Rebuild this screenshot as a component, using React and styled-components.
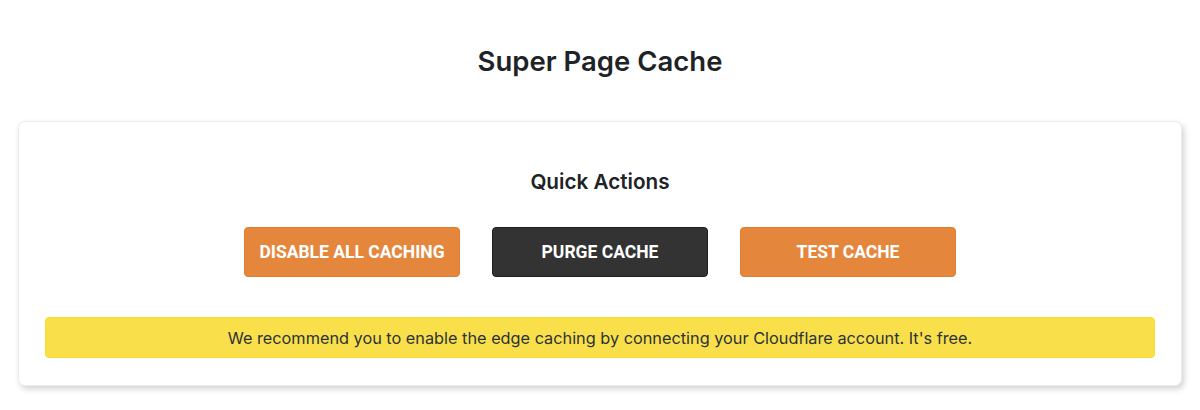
import React from "react";
import styled, { createGlobalStyle } from "styled-components";

const GlobalStyle = createGlobalStyle`
  body {
    margin: 0;
    background: #fff;
    font-family: Inter, "Noto Sans", sans-serif;
    color: #1d2327;
  }
`;

const Page = styled.div`
  padding: 0 18px 20px 18px;
  display: flex;
  flex-direction: column;
  align-items: stretch;
`;

const Title = styled.h1`
  margin: 0;
  padding: 45px 0 44px;
  text-align: center;
  font-size: 27.5px;
  font-weight: 600;
  line-height: 32px;
  color: #1d2327;
`;

const Card = styled.section`
  background: #fff;
  border: 1px solid #ececec;
  border-radius: 7px;
  box-shadow: 2px 3px 6px rgba(0, 0, 0, 0.18);
  padding: 46px 26px 27px;
  display: flex;
  flex-direction: column;
  align-items: center;
`;

const SectionTitle = styled.h2`
  margin: 0;
  font-size: 20.7px;
  font-weight: 600;
  line-height: 28px;
  color: #1d2327;
`;

const Actions = styled.div`
  display: flex;
  gap: 32px;
  margin-top: 31px;
`;

const ActionButton = styled.button`
  width: 216px;
  height: 50px;
  border-radius: 4px;
  border: 1px solid ${(p) => (p.$dark ? "#1e1e1e" : "#e27f2d")};
  background: ${(p) => (p.$dark ? "#333333" : "#e4873d")};
  color: #fff;
  font-family: Roboto, "Noto Sans", sans-serif;
  font-weight: 700;
  font-size: 17.5px;
  text-transform: uppercase;
  cursor: pointer;
`;

const Notice = styled.div`
  align-self: stretch;
  margin-top: 40px;
  background: #f9e04b;
  border: 1px solid #f5dc2a;
  border-radius: 4px;
  padding: 11px 12px 10px;
  text-align: center;
  font-size: 16.3px;
  line-height: 18px;
  color: #2c3338;
`;

export default function App() {
  return (
    <>
      <GlobalStyle />
      <Page>
        <Title>Super Page Cache</Title>
        <Card>
          <SectionTitle>Quick Actions</SectionTitle>
          <Actions>
            <ActionButton>Disable all caching</ActionButton>
            <ActionButton $dark>Purge cache</ActionButton>
            <ActionButton>Test cache</ActionButton>
          </Actions>
          <Notice>
            We recommend you to enable the edge caching by connecting your
            Cloudflare account. It's free.
          </Notice>
        </Card>
      </Page>
    </>
  );
}
